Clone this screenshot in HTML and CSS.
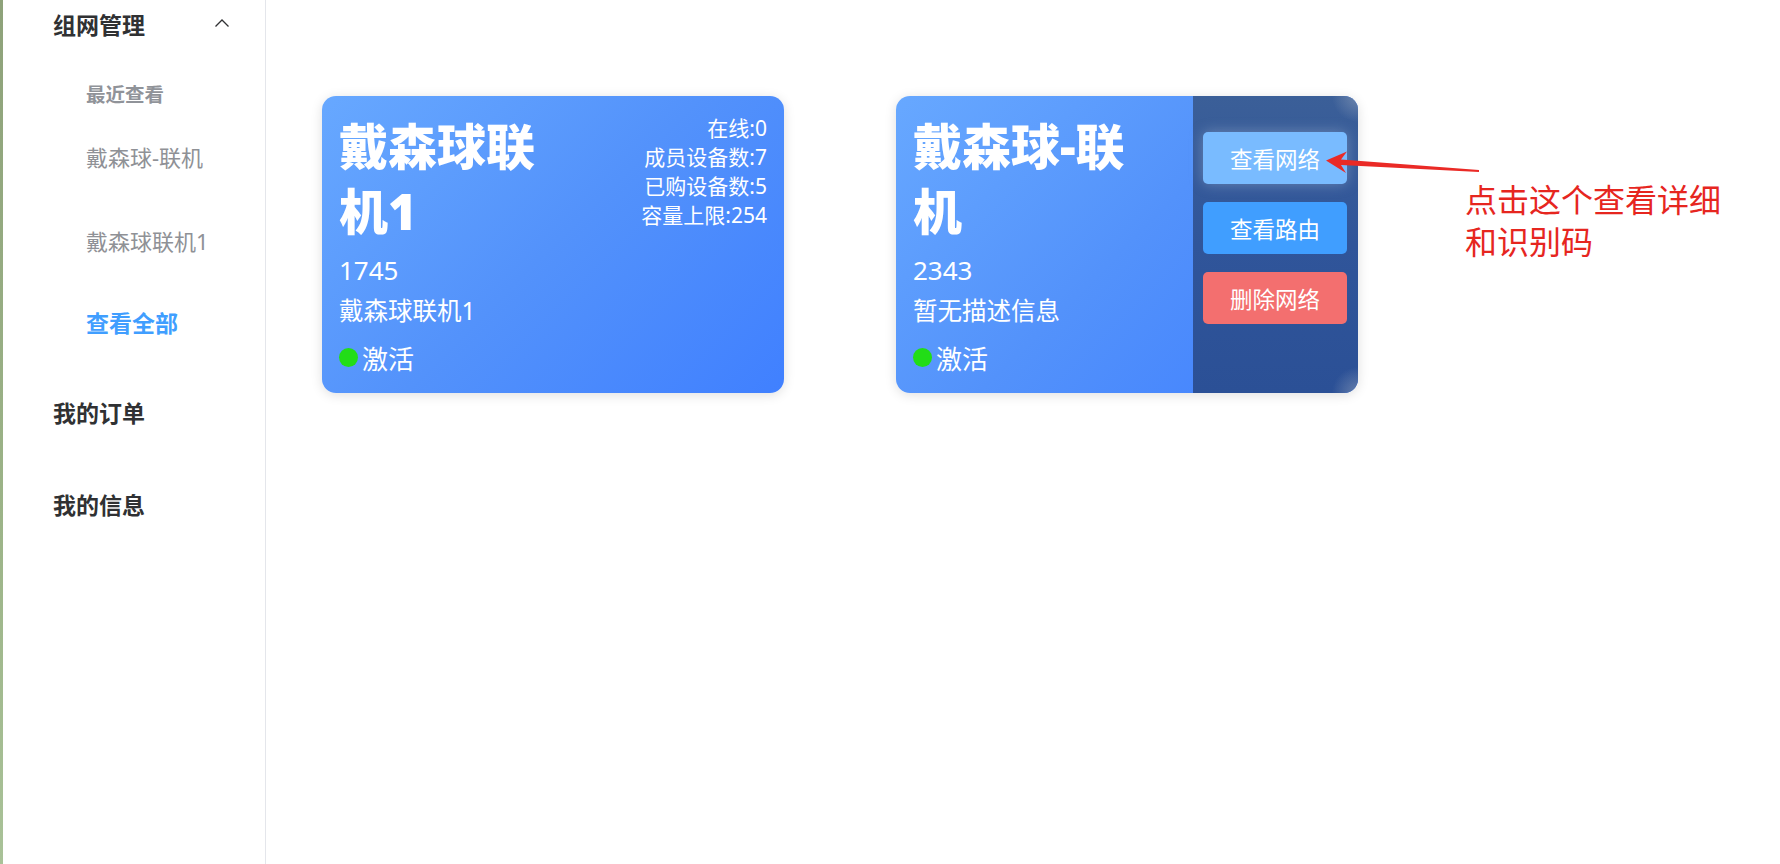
FILE: index.html
```html
<!DOCTYPE html>
<html lang="zh-CN">
<head>
<meta charset="utf-8">
<title>组网管理</title>
<link rel="stylesheet" href="styles.css">
</head>
<body>
<div class="app">
  <div class="strip"></div>
  <aside class="sidebar">
    <div class="menu-title">
      <span>组网管理</span>
      <svg class="chevron" width="16" height="10" viewBox="0 0 16 10"><polyline points="1.5,8.5 8,2 14.5,8.5" fill="none" stroke="#303133" stroke-width="1.3"/></svg>
    </div>
    <div class="group-title">最近查看</div>
    <div class="sub-item">戴森球-联机</div>
    <div class="sub-item">戴森球联机1</div>
    <div class="sub-item active">查看全部</div>
    <div class="menu-item">我的订单</div>
    <div class="menu-item last">我的信息</div>
  </aside>
  <main class="main">
    <div class="card">
      <div class="card-body">
        <div class="card-left">
          <div class="card-title">戴森球联机1</div>
          <div class="card-id">1745</div>
          <div class="card-desc">戴森球联机1</div>
          <div class="card-status"><span class="dot"></span>激活</div>
        </div>
        <div class="card-stats">
          <div>在线:0</div>
          <div>成员设备数:7</div>
          <div>已购设备数:5</div>
          <div>容量上限:254</div>
        </div>
      </div>
    </div>
    <div class="card">
      <div class="card-body">
        <div class="card-left">
          <div class="card-title">戴森球-联机</div>
          <div class="card-id">2343</div>
          <div class="card-desc">暂无描述信息</div>
          <div class="card-status"><span class="dot"></span>激活</div>
        </div>
      </div>
      <div class="card-actions">
        <button class="btn btn-light">查看网络</button>
        <button class="btn btn-primary">查看路由</button>
        <button class="btn btn-danger">删除网络</button>
      </div>
    </div>
  </main>
</div>
<div class="note">点击这个查看详细<br>和识别码</div>
<svg class="arrow" width="1780" height="864" viewBox="0 0 1780 864">
  <path d="M1326,160.5 L1347,151.5 L1341,159.5 L1479,170 L1479,172 L1341,165 L1346,173 Z" fill="#ea2a26"/>
</svg>
</body>
</html>
```

FILE: styles.css
```css
* { box-sizing: border-box; }
html, body { margin: 0; padding: 0; }
body {
  width: 1780px;
  height: 864px;
  overflow: hidden;
  background: #fff;
  font-family: "Noto Sans", "Noto Sans CJK SC", sans-serif;
  position: relative;
}
.app {
  display: flex;
  height: 864px;
}
.strip {
  width: 3px;
  flex: none;
  background: linear-gradient(180deg, #8ea27a 0%, #9cb488 60%, #a9c298 100%);
}
.sidebar {
  width: 263px;
  flex: none;
  border-right: 1px solid #e4e6eb;
  padding-left: 50px;
}
.menu-title {
  height: 48px;
  display: flex;
  align-items: center;
  justify-content: space-between;
  padding-right: 35px;
  font-size: 23px;
  font-weight: 700;
  color: #303133;
}
.chevron { display: block; margin-top: -2px; }
.group-title {
  margin-top: 33px;
  margin-bottom: 6px;
  line-height: 28px;
  padding-left: 33px;
  font-size: 19.5px;
  font-weight: 700;
  color: #909399;
}
.sub-item {
  height: 84px;
  line-height: 84px;
  padding-left: 33px;
  font-size: 22px;
  color: #8f9196;
}
.sub-item.active {
  color: #409eff;
  font-weight: 700;
  font-size: 23px;
  line-height: 80px;
  height: 87px;
}
.menu-item {
  height: 86px;
  line-height: 86px;
  font-size: 23px;
  font-weight: 700;
  color: #303133;
}
.menu-item.last { margin-top: 6px; }

.main {
  flex: 1;
  display: flex;
  align-items: flex-start;
  gap: 112px;
  padding: 96px 0 0 56px;
}
.card {
  width: 462px;
  height: 297px;
  border-radius: 14px;
  overflow: hidden;
  display: flex;
  color: #fff;
  background: linear-gradient(135deg, #67a8ff 0%, #5392fb 50%, #4080ff 100%);
  box-shadow: 0 2px 12px rgba(0, 0, 0, 0.13);
}
.card-body {
  flex: 1;
  display: flex;
  justify-content: space-between;
  padding: 18px 17px 16px 17px;
}
.card-title {
  width: 232px;
  font-size: 49px;
  font-weight: 900;
  line-height: 65px;
}
.card-id {
  margin-top: 6px;
  font-size: 26px;
  line-height: 40px;
}
.card-desc {
  margin-top: 5px;
  font-size: 24.5px;
  line-height: 32px;
}
.card-status {
  margin-top: 14px;
  display: flex;
  align-items: center;
  gap: 4px;
  font-size: 26px;
  line-height: 36px;
}
.dot {
  width: 19px;
  height: 19px;
  border-radius: 50%;
  background: #22dd17;
  margin-top: -4px;
}
.card-stats {
  text-align: right;
  font-size: 21px;
  line-height: 29px;
}
.card-actions {
  width: 165px;
  flex: none;
  display: flex;
  flex-direction: column;
  gap: 18px;
  padding: 36px 11px 0 10px;
  background:
    radial-gradient(circle at 100% 0%, rgba(150, 165, 190, 0.55) 0px, rgba(150, 165, 190, 0) 26px),
    radial-gradient(circle at 100% 100%, rgba(150, 165, 190, 0.55) 0px, rgba(150, 165, 190, 0) 26px),
    linear-gradient(180deg, #3b5f98 0%, #30559a 50%, #2b5096 100%);
}
.btn {
  height: 52px;
  border: none;
  border-radius: 5px;
  color: #fff;
  font-family: "Noto Sans", "Noto Sans CJK SC", sans-serif;
  font-size: 22.5px;
  padding: 0;
  cursor: pointer;
}
.btn-light {
  background: #79bbff;
  box-shadow: 0 0 14px rgba(200, 215, 235, 0.35);
}
.btn-primary { background: #409eff; }
.btn-danger { background: #f36f6f; }

.note {
  position: absolute;
  left: 1465px;
  top: 179px;
  font-size: 32px;
  line-height: 42px;
  color: #e6261f;
}
.arrow {
  position: absolute;
  left: 0;
  top: 0;
  pointer-events: none;
}
```
